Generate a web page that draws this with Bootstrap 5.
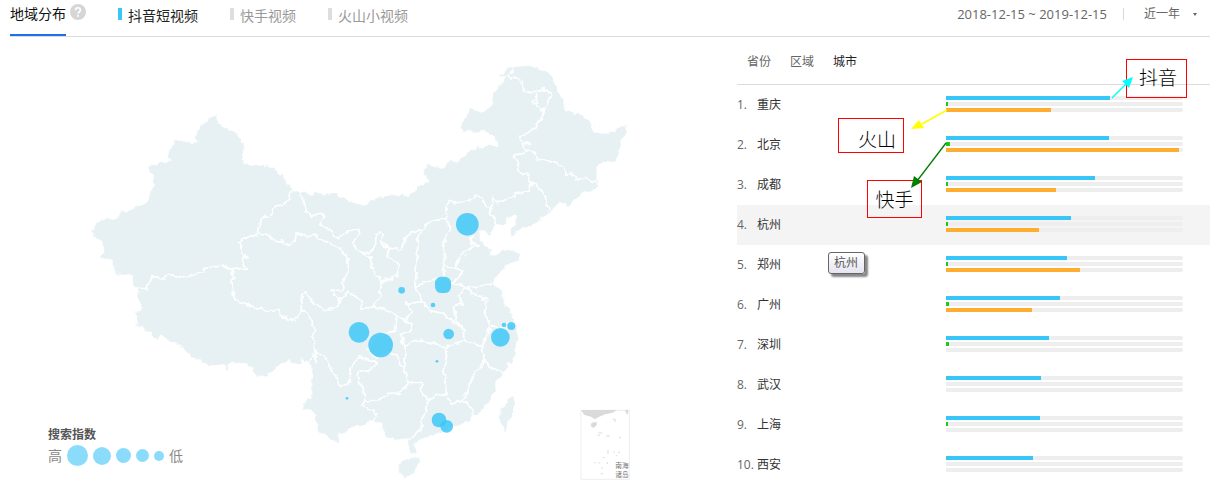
<!DOCTYPE html>
<html lang="zh-CN">
<head>
<meta charset="utf-8">
<meta name="viewport" content="width=device-width, initial-scale=1">
<title>地域分布</title>
<link href="https://cdn.jsdelivr.net/npm/bootstrap@5.3.0/dist/css/bootstrap.min.css" rel="stylesheet">
<script src="https://cdn.jsdelivr.net/npm/bootstrap@5.3.0/dist/js/bootstrap.bundle.min.js"></script>
<style>
  body { font-family: "Open Sans", "Noto Sans CJK SC", sans-serif; font-size: 12px; line-height: 20px; color: #333; background: #fff; }
  button { font: inherit; color: inherit; background: none; border: 0; padding: 0; }
  .page { padding: 0 10px; }
  .topbar { height: 37px; border-bottom: 1px solid #dcdcdc; font-size: 14px; }
  .section-title { font-size: 14px; line-height: 20px; height: 36px; padding-top: 4px; margin: 0; color: #111; font-weight: 400; border-bottom: 2px solid #1f6fe8; }
  .help { width: 16px; height: 16px; margin: 4px 32px 0 4px; }
  .series { margin-right: 32px; padding-top: 6px; color: #999; line-height: 20px; }
  .series::before { content: ""; width: 4px; height: 12px; margin: 2px 6px 0 0; background: #dedede; }
  .series.active { color: #222; }
  .series.active::before { background: #38c6f8; }
  .dates { font-size: 13px; color: #666; padding-top: 4px; }
  .split { width: 1px; height: 12px; background: #d8d8d8; margin: 8px 20px 0 16px; }
  .period { font-size: 12px; color: #666; padding-top: 4px; padding-right: 13px; }
  .period.dropdown-toggle::after { border-width: 3px 2px 0; margin: 0 0 0 13px; }
  .main { grid-template-columns: minmax(0, 1fr) 473px; }
  .map { display: block; width: 100%; height: auto; }
  .legend-box { left: 38px; bottom: 21px; color: #555; }
  .legend-row { font-size: 14px; color: #888; gap: 5px; }
  .dot { border-radius: 50%; background: #8bdcfa; }
  .d1 { width: 21px; height: 21px; } .d2 { width: 18px; height: 18px; } .d3 { width: 15px; height: 15px; }
  .d4 { width: 13px; height: 13px; } .d5 { width: 10px; height: 10px; }
  .scope { height: 48px; gap: 19px; padding: 2px 10px 0; border-bottom: 1px solid #dcdcdc; color: #666; }
  .scope .active { color: #222; }
  .rank { height: 40px; padding-right: 27px; }
  .rank.hovered { background: #f4f4f4; }
  .rank .no { width: 20px; color: #666; white-space: nowrap; }
  .rank .city { width: 189px; }
  .bars { gap: 2px; padding-bottom: 2px; }
  .track { height: 4px; background: #eee; border-radius: 0 2px 2px 0; }
  .fill { height: 4px; }
  .c-a { background: #38c6f8; } .c-b { background: #1ec61e; } .c-c { background: #ffad30; }
  .notes { left: 0; top: 0; pointer-events: none; }
  .note { border: 1px solid #f00; color: #000; font-size: 19px; line-height: 36px; font-weight: 300; text-align: center; }
  .n-a { left: 389px; top: 22px; width: 61px; height: 39px; padding-left: 3px; }
  .n-b { left: 101px; top: 81px; width: 66px; height: 35px; line-height: 42px; padding-left: 12px; }
  .n-c { left: 130px; top: 143px; width: 55px; height: 38px; line-height: 38px; }
  .tip { left: 91px; top: 215px; padding: 0 6px 0 5px; border: 1px solid #666; border-radius: 3px; background: linear-gradient(#fff, #e4e5f0); box-shadow: 3px 3px 2px #888; color: #555; }
</style>
</head>
<body>
<div class="page">
  <header class="topbar d-flex align-items-start">
    <h1 class="section-title">地域分布</h1>
    <svg class="help" viewBox="0 0 16 16" role="img" aria-label="说明"><circle cx="8" cy="8" r="8" fill="#d6d6d6"/><path d="M5.6 6.2C5.6 3 10.4 3 10.4 6c0 1.8-2.3 1.800-2.300 3.700" fill="none" stroke="#fff" stroke-width="1.700"/><path d="M7.200 11h1.800v1.800H7.200z" fill="#fff"/></svg>
    <button type="button" class="series active d-flex">抖音短视频</button>
    <button type="button" class="series d-flex">快手视频</button>
    <button type="button" class="series d-flex">火山小视频</button>
    <span class="dates ms-auto">2018-12-15 ~ 2019-12-15</span>
    <span class="split"></span>
    <button type="button" class="period dropdown-toggle d-flex align-items-center">近一年</button>
  </header>

  <main class="main d-grid align-items-start">
    <section class="position-relative">
      <svg class="map" viewBox="30 111 2181 1350" role="img" aria-label="搜索指数地图">
        <!-- Roughens the coastline and the province borders -->
        <filter id="rough" filterUnits="userSpaceOnUse" x="240" y="160" width="1700" height="1300" color-interpolation-filters="sRGB">
          <feTurbulence type="fractalNoise" baseFrequency="0.05" numOctaves="2" seed="4"/>
          <feDisplacementMap in="SourceGraphic" scale="20" xChannelSelector="R" yChannelSelector="G"/>
        </filter>
        <g filter="url(#rough)">
        <g fill="#e7f1f4" stroke="#e7f1f4" stroke-width="2" stroke-linejoin="round">
          <path d="M627 355 648 352 652 368 668 382 685 393 700 392 716 405 722 420 731 432 731 458 724 473 729 488 745 494 795 497 820 507 837 522 847 525 855 545 870 565 874 574 898 577 940 582 1000 580 1025 592 1040 600 1075 610 1100 613 1130 597 1165 587 1220 586 1245 576 1260 558 1286 541 1276 525 1276 505 1285 495 1305 503 1330 504 1353 485 1380 480 1395 473 1405 455 1430 443 1470 438 1492 438 1492 423 1475 405 1455 393 1440 390 1425 398 1405 392 1388 395 1380 388 1390 370 1410 330 1445 338 1468 325 1477 315 1480 280 1510 245 1517 225 1500 225 1520 208 1545 202 1590 198 1620 208 1645 220 1665 250 1672 278 1685 295 1695 330 1715 340 1745 345 1770 365 1782 395 1810 405 1840 395 1860 383 1880 380 1880 395 1865 420 1860 445 1850 470 1838 490 1810 483 1790 495 1785 510 1790 552 1785 568 1770 574 1750 573 1738 590 1712 605 1708 618 1680 610 1665 617 1648 638 1610 665 1560 690 1530 708 1540 685 1555 650 1542 640 1525 648 1510 670 1485 672 1470 700 1440 690 1438 720 1450 738 1468 745 1470 770 1485 767 1510 750 1560 762 1555 780 1525 790 1500 815 1473 850 1490 865 1505 875 1520 925 1540 948 1542 960 1525 970 1550 980 1545 995 1555 1018 1542 1040 1545 1065 1535 1080 1508 1115 1485 1140 1485 1165 1470 1200 1442 1235 1420 1243 1410 1262 1385 1272 1360 1275 1320 1295 1290 1307 1260 1318 1240 1335 1245 1355 1235 1362 1227 1345 1230 1315 1210 1312 1195 1318 1160 1308 1148 1295 1145 1272 1120 1262 1085 1275 1065 1276 1045 1288 1015 1300 1013 1327 1000 1320 990 1318 980 1304 955 1295 950 1265 940 1230 908 1230 918 1205 938 1180 938 1095 925 1088 905 1072 900 1090 890 1093 865 1080 845 1088 810 1120 795 1127 765 1125 760 1105 742 1090 705 1082 688 1090 680 1113 677 1090 645 1095 610 1088 598 1076 575 1070 550 1045 515 1022 485 1005 475 1015 435 990 418 980 405 935 423 935 425 915 415 895 418 865 400 855 395 828 365 822 345 812 335 780 305 770 315 760 310 720 285 718 278 695 290 670 325 655 332 660 350 660 362 637 385 637 405 623 448 602 452 575 465 560 458 525 447 498 490 487 512 488 507 470 515 445 527 420 550 428 575 431 592 423 592 390 610 377 623 373Z"/>
          <path d="M1197 1400 1215 1380 1258 1370 1255 1390 1245 1415 1222 1433 1202 1422Z"/>
          <path d="M1530 1192 1542 1190 1544 1205 1530 1255 1518 1285 1516 1300 1502 1265 1500 1245 1515 1210Z"/>
        </g>
        <g fill="none" stroke="#fff" stroke-width="5" stroke-linejoin="round">
          <path d="M874 574 868 582 868 600 845 615 830 618 808 645 785 650 780 678 770 700 715 725 722 730 723 750 740 772 730 780 737 805 695 808 665 795 615 805 595 820 550 833 510 823 495 837 455 833 440 863 418 866"/>
          <path d="M695 808 700 825 695 845 702 895 725 910 780 925 805 934 830 930 852 950 865 962 885 958 900 945 905 928 925 938 940 980 945 1060 952 1085 938 1062 930 1088"/>
          <path d="M770 700 800 702 808 712 830 723 845 726 870 733 888 720 892 698 920 710 940 703 960 718 990 730 1025 748 1040 770 1048 810 1025 850 1030 870 995 870 1015 895 1020 905 1000 930 970 928 940 905 915 875 902 895 905 930"/>
          <path d="M900 577 912 615 930 648 970 638 975 652 958 673 990 692 1015 715 1035 700 1075 688 1080 702 1058 728 1065 742 1090 760 1110 770 1115 800 1140 835 1145 845 1195 830 1195 790 1160 770 1168 745 1143 725 1153 702 1140 695 1125 715 1122 750 1090 760"/>
          <path d="M1168 745 1205 750 1220 710 1245 692 1265 690 1290 665 1340 655 1338 620 1355 598 1362 615 1387 604 1410 602 1430 582 1445 590 1455 620 1475 625 1480 590 1495 608 1540 585 1585 570 1590 550M1475 625 1467 640 1485 655 1485 672"/>
          <path d="M1590 550 1620 568 1635 590 1645 635M1590 550 1580 520 1558 515 1550 480 1542 465 1570 460 1578 450 1595 450 1615 478 1640 482 1670 490 1685 500 1698 525 1715 518 1730 545 1742 534 1760 532 1788 550"/>
          <path d="M1578 450 1560 413 1585 398 1610 380 1618 365 1633 345 1633 328 1620 330 1610 310 1605 275 1573 275 1565 242 1545 235 1525 230 1540 215 1538 205M1605 275 1635 265 1653 285 1633 328M1595 305 1608 298 1612 308 1600 312ZM1575 436 1584 428 1590 436"/>
          <path d="M1265 690 1250 725 1252 760 1248 820 1245 860 1270 905 1220 910 1235 935 1220 955 1230 970M1340 655 1350 690 1330 730 1335 780 1328 830M1245 860 1275 848 1300 838 1328 830 1360 845 1400 865 1440 858 1473 848"/>
          <path d="M1330 798 1370 808 1380 770 1415 740 1438 735M1370 808 1392 812 1360 845M1440 735 1418 728 1410 714 1422 710M1400 865 1375 890 1390 910 1360 920 1367 960 1390 985 1392 1025M1400 865 1430 890 1460 895 1455 940 1470 975 1460 1010 1445 1040 1455 1075M1470 975 1500 985 1525 975"/>
          <path d="M1145 845 1140 885 1120 920M1020 900 1045 872 1080 900 1085 925 1120 920 1150 927 1180 940 1230 970 1235 990 1200 1005 1215 1040 1215 1110M1270 905 1290 932 1330 940 1350 958 1390 985M1190 950 1180 995 1120 1010 1105 1050 1130 1075 1165 1055 1190 1070 1205 1100 1215 1110"/>
          <path d="M1215 1040 1250 1018 1275 1030 1300 1025 1335 1045 1362 1030 1392 1025 1420 1030 1445 1040M1335 1045 1340 1070 1330 1110 1340 1180 1312 1187 1285 1200 1270 1190 1260 1150 1225 1150 1215 1110M1455 1075 1455 1085 1420 1125 1410 1160 1390 1200 1350 1210 1340 1180M1455 1085 1480 1112 1508 1115M1390 1200 1410 1215 1420 1243M1285 1200 1270 1250 1260 1290 1230 1320"/>
          <path d="M1225 1150 1200 1180 1170 1180 1135 1200 1090 1205M945 1060 975 1070 1000 1120 1020 1158 1050 1145 1055 1100 1080 1070 1110 1082 1135 1090 1110 1108 1070 1115 1075 1140 1095 1180 1090 1220 1132 1240 1120 1262"/>
        </g>
        </g>
        <g fill="#38c6f8" fill-opacity=".82">
          <circle cx="1402" cy="673" r="34"/><circle cx="1205" cy="871" r="10"/><rect x="1305" y="830" width="48" height="49" rx="19"/>
          <circle cx="1299" cy="915" r="7"/><circle cx="1077" cy="997" r="31"/><circle cx="1142" cy="1035" r="37"/><circle cx="1346" cy="1002" r="16"/>
          <circle cx="1512" cy="975" r="7"/><circle cx="1534" cy="978" r="12"/><circle cx="1501" cy="1012" r="28"/><circle cx="1311" cy="1084" r="4"/>
          <circle cx="1317" cy="1260" r="22"/><circle cx="1340" cy="1279" r="19"/><circle cx="1041" cy="1195" r="4"/>
        </g>
        <path d="M1743 1231H1888V1438H1743Z" fill="#fff" stroke="#eee" stroke-width="3"/>
        <path d="M1744 1230H1850L1838 1238 1815 1243 1795 1252 1784 1258 1775 1251 1752 1244ZM1775 1268 1790 1266 1790 1276 1780 1284 1772 1278ZM1874 1230H1886L1882 1246Z" fill="#dadada"/>
        <path d="M1838 1258h9M1842 1263h6M1795 1299h12M1792 1306h8M1818 1308h12M1857 1312h6M1824 1350v12M1839 1356h5M1854 1357h6M1808 1373h6M1782 1388h5M1795 1389h6M1822 1386v6M1803 1404h6M1802 1421h7M1847 1367h5" stroke="#ddd" stroke-width="3"/>
        <g fill="#777" font-size="20" font-family="Noto Sans CJK SC, sans-serif"><text x="1846" y="1405">南海</text><text x="1846" y="1431">诸岛</text></g>
      </svg>
      <div class="legend-box position-absolute">
        <div class="fw-bold">搜索指数</div>
        <div class="legend-row d-flex align-items-center"><span>高</span><i class="dot d1"></i><i class="dot d2"></i><i class="dot d3"></i><i class="dot d4"></i><i class="dot d5"></i><span>低</span></div>
      </div>
    </section>

    <section class="position-relative">
      <nav class="scope d-flex align-items-center"><button type="button">省份</button><button type="button">区域</button><button type="button" class="active">城市</button></nav>
      <ol class="list-unstyled mb-0" id="ranking"></ol>
      <div class="note n-a position-absolute">抖音</div>
      <div class="note n-b position-absolute">火山</div>
      <div class="note n-c position-absolute">快手</div>
      <svg class="notes position-absolute" width="473" height="200" viewBox="0 0 473 200" aria-hidden="true">
        <path d="M210 73 185 87" stroke="#ff0" stroke-width="1.500"/><path d="M174 92 182 83 187 91Z" fill="#ff0"/>
        <path d="M209 106 180 144" stroke="green" stroke-width="1.300"/><path d="M174 151 177 139 185 145Z" fill="green"/>
        <path d="M375 61 390 46" stroke="#0ff" stroke-width="1.500"/><path d="M396 40 392 51 385 44Z" fill="#0ff"/>
      </svg>
      <div class="tip position-absolute" role="tooltip">杭州</div>
    </section>
  </main>
</div>
<script>
  // City, then the share of the track taken by each of the three series (percent)
  const cities = [
    ["重庆", 69.2, 0.9, 44.3], ["北京", 68.8, 1.7, 98.3], ["成都", 62.9, 0.9, 46.4], ["杭州", 52.8, 0.9, 39.3],
    ["郑州", 51.1, 0.9, 56.6], ["广州", 48.1, 1.3, 36.3], ["深圳", 43.5, 1.3, 0], ["武汉", 40.1, 0, 0],
    ["上海", 39.7, 0.9, 0], ["西安", 36.8, 0, 0]
  ];
  document.getElementById("ranking").innerHTML = cities.map(([city, a, b, c], i) =>
    `<li class="rank d-flex align-items-center${city === "杭州" ? " hovered" : ""}">
      <span class="no">${i + 1}.</span><span class="city">${city}</span>
      <div class="bars d-flex flex-column flex-grow-1">
        <div class="track"><div class="fill c-a" style="width:${a}%"></div></div>
        <div class="track"><div class="fill c-b" style="width:${b}%"></div></div>
        <div class="track"><div class="fill c-c" style="width:${c}%"></div></div>
      </div></li>`).join("");
</script>
</body>
</html>
